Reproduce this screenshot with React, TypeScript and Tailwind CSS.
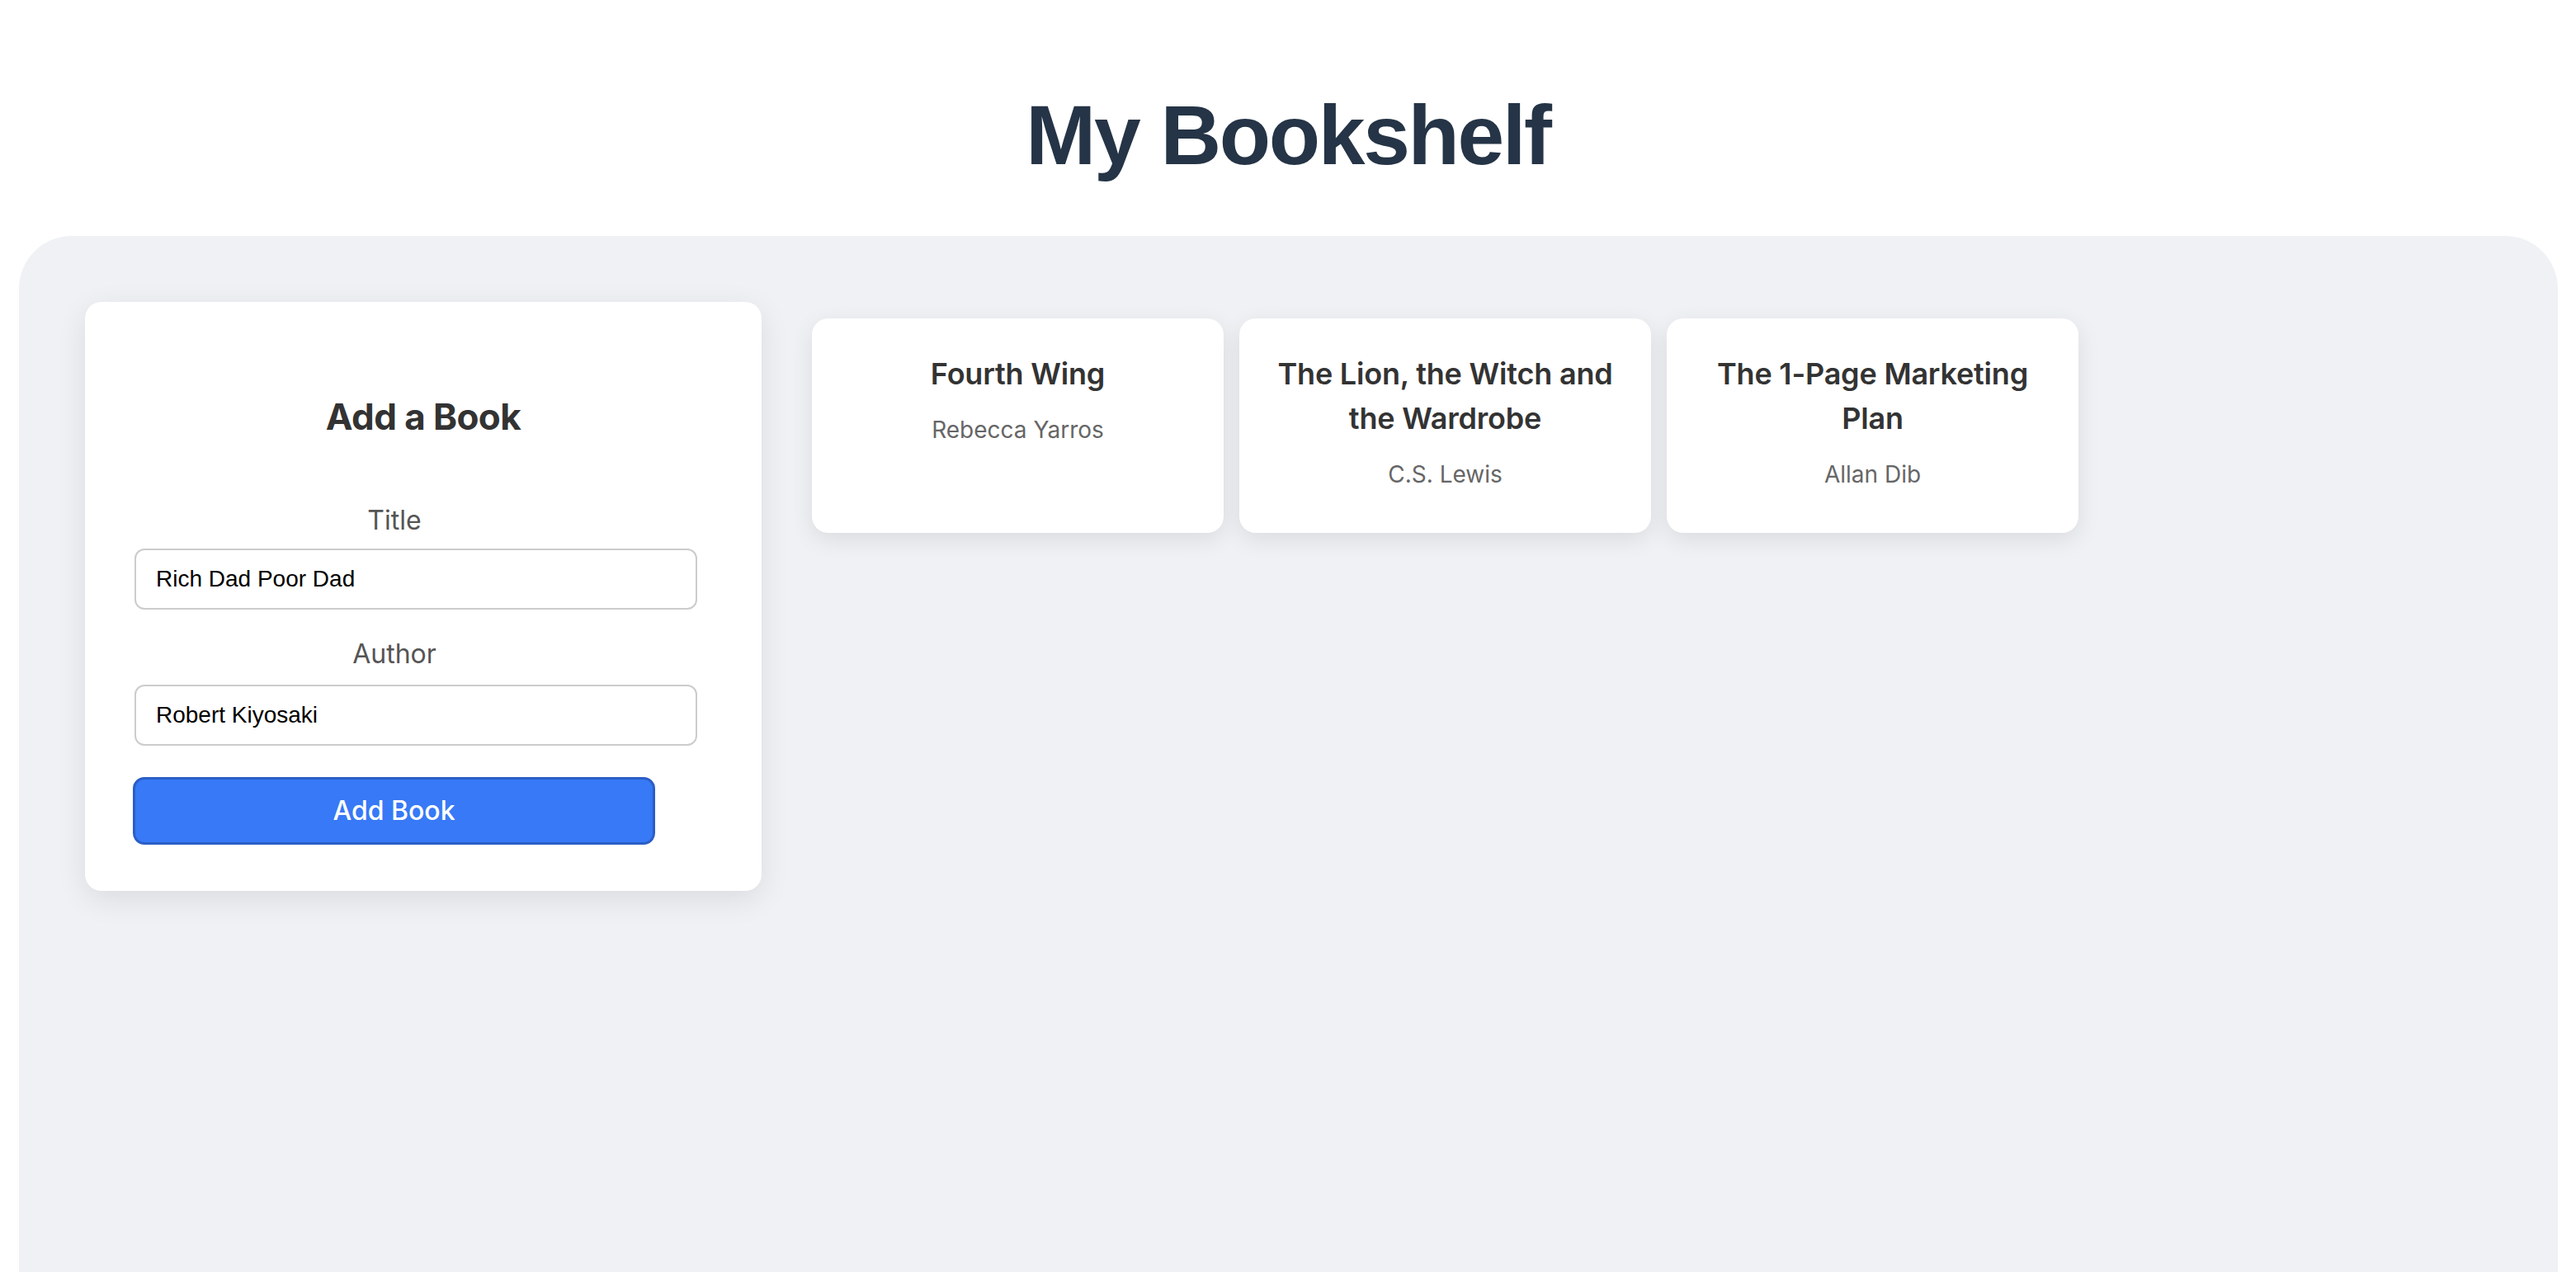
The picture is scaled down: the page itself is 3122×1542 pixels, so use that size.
import React from "react";

const books = [
  { title: "Fourth Wing", author: "Rebecca Yarros" },
  { title: "The Lion, the Witch and the Wardrobe", author: "C.S. Lewis" },
  { title: "The 1-Page Marketing Plan", author: "Allan Dib" },
];

export default function App() {
  return (
    <div className="min-h-screen bg-white overflow-hidden" style={{ fontFamily: "Inter, 'Noto Sans', sans-serif" }}>
      <header className="pt-[113px] pb-[71px] text-center">
        <h1
          className="text-[102px] leading-[102px] font-bold tracking-[-2.3px] text-[#253446]"
          style={{ fontFamily: "'Liberation Sans', Arial, sans-serif" }}
        >
          My Bookshelf
        </h1>
      </header>

      <main className="ml-[23px] mr-[22px] min-h-[1300px] rounded-t-[64px] bg-[#f0f1f5] pl-[80px] pt-[80px]">
        <div className="flex items-start">
          <section className="w-[820px] shrink-0 rounded-[20px] bg-white pl-[60px] pt-[106px] pb-[56px] shadow-[0_10px_36px_rgba(0,0,0,0.09)]">
            <h2 className="-ml-[60px] text-center text-[44px] leading-[66px] font-bold tracking-[-0.6px] text-[#333333] mb-[69px]">
              Add a Book
            </h2>
            <form className="w-[630px]" onSubmit={(e) => e.preventDefault()}>
              <label className="block text-center text-[32px] leading-[48px] text-[#555555] mb-[10px]">Title</label>
              <input
                defaultValue="Rich Dad Poor Dad"
                className="block w-[682px] h-[74px] px-[24px] border-2 border-[#cccccc] rounded-[12px] bg-white text-[28px] text-black outline-none mb-[30px]"
                style={{ fontFamily: "'Liberation Sans', Arial, sans-serif" }}
              />
              <label className="block text-center text-[32px] leading-[48px] text-[#555555] mb-[13px]">Author</label>
              <input
                defaultValue="Robert Kiyosaki"
                className="block w-[682px] h-[74px] px-[24px] border-2 border-[#cccccc] rounded-[12px] bg-white text-[28px] text-black outline-none mb-[38px]"
                style={{ fontFamily: "'Liberation Sans', Arial, sans-serif" }}
              />
              <button
                type="submit"
                className="block w-[633px] -ml-[2px] h-[82px] rounded-[14px] border-[3px] border-[#2b5ec6] bg-[#3779f6] text-[32px] font-medium text-white"
              >
                Add Book
              </button>
            </form>
          </section>

          <div className="ml-[61px] mt-[20px] flex items-stretch gap-[19px]">
            {books.map((b) => (
              <div
                key={b.title}
                className="w-[499px] rounded-[20px] bg-white px-[40px] pt-[40px] pb-[50px] text-center shadow-[0_8px_28px_rgba(0,0,0,0.09)]"
              >
                <h3 className="text-[36px] leading-[54px] font-semibold tracking-[-0.2px] text-[#333333]">{b.title}</h3>
                <p className="mt-[20px] text-[28px] leading-[42px] text-[#666666]">{b.author}</p>
              </div>
            ))}
          </div>
        </div>
      </main>
    </div>
  );
}
